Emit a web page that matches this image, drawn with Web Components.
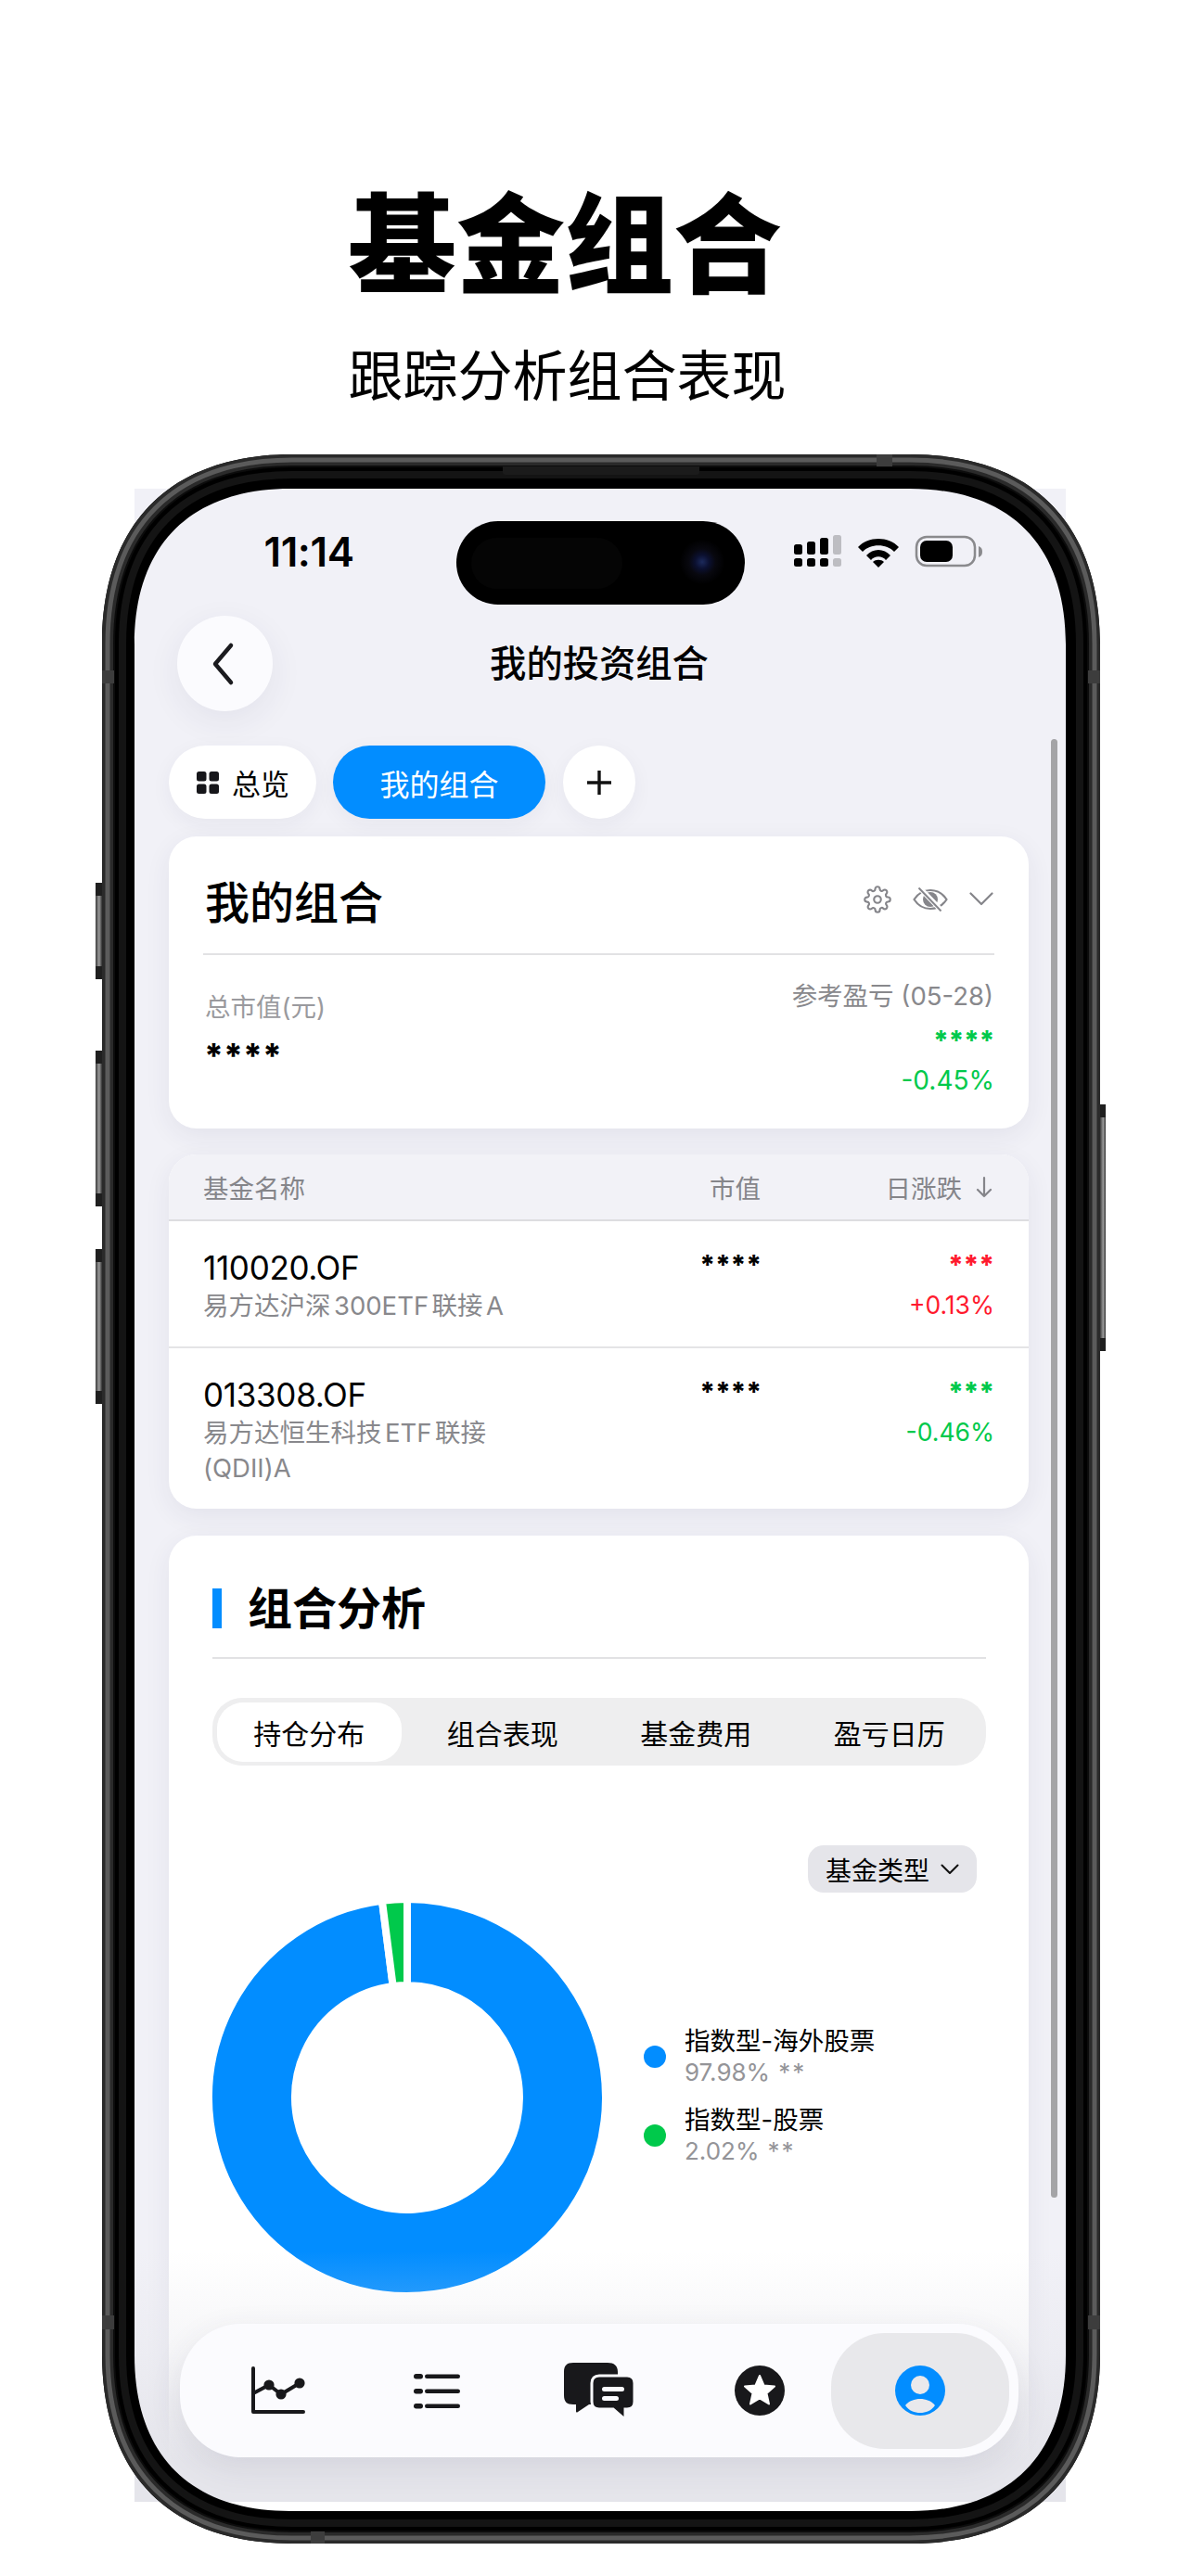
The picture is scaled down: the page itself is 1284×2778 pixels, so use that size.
<!DOCTYPE html>
<html lang="zh-CN">
<head>
<meta charset="utf-8">
<title>基金组合</title>
<style>
  html, body { margin: 0; padding: 0; background: #fff; }
  body { font-family: Inter, "Noto Sans CJK SC", sans-serif; color: #000; }
</style>
</head>
<body>
<promo-header heading="基金组合" sub="跟踪分析组合表现"></promo-header>

<phone-frame>
  <status-bar time="11:14"></status-bar>
  <nav-header>我的投资组合</nav-header>
  <tab-strip></tab-strip>
  <summary-card title="我的组合"></summary-card>
  <fund-table>
    <fund-row code="110020.OF" stars="***" pct="+0.13%" tone="up">易方达沪深300ETF联接A</fund-row>
    <fund-row code="013308.OF" stars="***" pct="-0.46%" tone="down">易方达恒生科技ETF联接(QDII)A</fund-row>
  </fund-table>
  <analysis-card title="组合分析">
    <seg-tabs items="持仓分布,组合表现,基金费用,盈亏日历"></seg-tabs>
    <holding-chart></holding-chart>
  </analysis-card>
  <bottom-bar></bottom-bar>
</phone-frame>

<script>
const CN = 'Inter, "Noto Sans CJK SC", sans-serif';
const BLUE = "#028dff";
const GREEN = "#00c94b";
const RED = "#ff1a2e";

class PromoHeader extends HTMLElement {
  constructor() {
    super();
    this._root = this.attachShadow({ mode: "open" });
  }

  connectedCallback() {
    this._root.innerHTML = `
      <style>
        :host {
          display: flex;
          flex-direction: column;
          align-items: center;
          height: 490px;
          box-sizing: border-box;
          padding: 195px 66px 0 0;
          font-family: ${CN};
          color: #000;
        }
        h1 { margin: 0; font-size: 117px; line-height: 140px; font-weight: 900; }
        p { margin: 36px 0 0 5px; font-size: 59px; line-height: 70px; font-weight: 400; }
      </style>
      <h1>${this.getAttribute("heading")}</h1>
      <p>${this.getAttribute("sub")}</p>
    `;
  }
}

class PhoneFrame extends HTMLElement {
  constructor() {
    super();
    this._root = this.attachShadow({ mode: "open" });
  }

  // rounded rect with a softer, iOS like corner
  _rr(x, y, w, h, r) {
    const c = r * 0.36;
    return `M${x + r} ${y}H${x + w - r}C${x + w - c} ${y} ${x + w} ${y + c} ${x + w} ${y + r}` +
      `V${y + h - r}C${x + w} ${y + h - c} ${x + w - c} ${y + h} ${x + w - r} ${y + h}` +
      `H${x + r}C${x + c} ${y + h} ${x} ${y + h - c} ${x} ${y + h - r}` +
      `V${y + r}C${x} ${y + c} ${x + c} ${y} ${x + r} ${y}Z`;
  }

  connectedCallback() {
    const outer = this._rr(0, 0, 1076, 2253, 205);
    const band = this._rr(13, 13, 1050, 2227, 192);
    const hole = this._rr(35, 37, 1004, 2181, 168);
    this._root.innerHTML = `
      <style>
        :host {
          display: block;
          position: relative;
          width: 1076px;
          height: 2253px;
          margin-left: 110px;
          box-sizing: border-box;
          padding: 37px 0 0 35px;
        }
        .screen {
          position: relative;
          width: 1004px;
          height: 2171px;
          overflow: hidden;
          background: #f1f1f7;
        }
        .bezel { position: absolute; left: 0; top: 0; pointer-events: none; }
        .btn {
          position: absolute;
          width: 7px;
          background: linear-gradient(90deg, #3a3a3a, #9b9b9b 55%, #333);
        }
        .btn::before, .btn::after {
          content: "";
          position: absolute;
          left: 0;
          right: 0;
          height: 14px;
          background: #1f1f1f;
        }
        .btn::before { top: 0; }
        .btn::after { bottom: 0; }
        .l { left: -7px; border-radius: 3px 0 0 3px; }
        .r { right: -6px; width: 6px; border-radius: 0 3px 3px 0; }
      </style>
      <div class="screen"><slot></slot></div>
      <svg class="bezel" width="1076" height="2253" viewBox="0 0 1076 2253">
        <path d="${outer}${hole}" fill="#000" fill-rule="evenodd"/>
        <path d="${outer}${band}" fill="#2a2a2a" fill-rule="evenodd"/>
        <path d="${this._rr(6, 6, 1064, 2241, 199)}" fill="none" stroke="#5b5b5b" stroke-width="5"/>
        <path d="${band}" fill="none" stroke="#0c0c0c" stroke-width="2"/>
        <path d="${this._rr(22, 22, 1032, 2209, 183)}" fill="none" stroke="#141414" stroke-width="8"/>
        <path d="M432 13H644V19Q644 22 641 22H435Q432 22 432 19Z" fill="#1b1b1b"/>
        <rect x="835" y="0" width="17" height="13" fill="#3d3d3d"/>
        <rect x="225" y="2240" width="15" height="13" fill="#3d3d3d"/>
        <rect x="0" y="233" width="13" height="14" fill="#3d3d3d"/>
        <rect x="1063" y="233" width="13" height="14" fill="#3d3d3d"/>
        <rect x="0" y="2007" width="13" height="15" fill="#3d3d3d"/>
        <rect x="1063" y="2007" width="13" height="15" fill="#3d3d3d"/>
      </svg>
      <div class="btn l" style="top:462px;height:104px"></div>
      <div class="btn l" style="top:643px;height:168px"></div>
      <div class="btn l" style="top:857px;height:167px"></div>
      <div class="btn r" style="top:701px;height:266px"></div>
    `;
  }
}

class StatusBar extends HTMLElement {
  constructor() {
    super();
    this._root = this.attachShadow({ mode: "open" });
  }

  connectedCallback() {
    this._root.innerHTML = `
      <style>
        :host {
          display: flex;
          height: 137px;
          box-sizing: border-box;
          padding-top: 35px;
          align-items: flex-start;
        }
        .time {
          width: 347px;
          box-sizing: border-box;
          padding-left: 29px;
          text-align: center;
          font: 600 44px/66px Inter, sans-serif;
          letter-spacing: -0.4px;
          color: #000;
        }
        .island {
          position: relative;
          width: 311px;
          height: 90px;
          border-radius: 45px;
          background: #000;
        }
        .sensor {
          position: absolute;
          left: 16px;
          top: 18px;
          width: 163px;
          height: 55px;
          border-radius: 28px;
          background: #050505;
        }
        .lens {
          position: absolute;
          left: 241px;
          top: 20px;
          width: 48px;
          height: 48px;
          border-radius: 50%;
          background: radial-gradient(circle, #1c2a5c 0, #0b1030 22%, #08080f 42%, #000 72%);
        }
        svg { display: block; margin: 15px 0 0 50px; }
      </style>
      <div class="time">${this.getAttribute("time")}</div>
      <div class="island"><div class="sensor"></div><div class="lens"></div></div>
      <svg width="210" height="38" viewBox="0 0 210 38">
        <g fill="#000">
          <rect x="3" y="25" width="9" height="9" rx="2.5"/>
          <rect x="17" y="25" width="9" height="9" rx="2.5"/>
          <rect x="31" y="25" width="9" height="9" rx="2.5"/>
          <rect x="3" y="10" width="9" height="11" rx="2.5"/>
          <rect x="17" y="7" width="9" height="14" rx="2.5"/>
          <rect x="31" y="3" width="9" height="18" rx="2.5"/>
        </g>
        <g fill="#bdbdc2">
          <rect x="45" y="25" width="9" height="9" rx="2.5"/>
          <rect x="45" y="0" width="9" height="21" rx="2.5"/>
        </g>
        <path d="M72 13C83 1 105 1 116 13L111 18C103 9 85 9 77 18Z" fill="#000"/>
        <path d="M81 22C88 14 100 14 107 22L102 27C98 22 90 22 86 27Z" fill="#000"/>
        <path d="M94 35L88 29C91 26 97 26 100 29Z" fill="#000"/>
        <rect x="135" y="2" width="63" height="31" rx="11" fill="none" stroke="#8a8a8d" stroke-width="2.5"/>
        <rect x="139" y="6" width="35" height="23" rx="7" fill="#000"/>
        <path d="M202 12C205 13 206 15 206 18C206 21 205 23 202 24Z" fill="#8a8a8d"/>
      </svg>
    `;
  }
}

class NavHeader extends HTMLElement {
  constructor() {
    super();
    this._root = this.attachShadow({ mode: "open" });
  }

  connectedCallback() {
    this._root.innerHTML = `
      <style>
        :host {
          display: grid;
          grid-template-columns: 1fr auto 1fr;
          align-items: center;
          height: 103px;
          padding: 0 46px;
          margin-bottom: 37px;
          font-family: ${CN};
        }
        .back {
          width: 103px;
          height: 103px;
          border-radius: 50%;
          background: #fbfbfe;
          box-shadow: 0 10px 36px rgba(40, 40, 80, .07);
          display: flex;
          align-items: center;
          justify-content: center;
        }
        .back svg { margin-right: 6px; }
        .title { font-size: 39.3px; font-weight: 500; line-height: 50px; color: #000; margin-right: 2px; }
      </style>
      <div class="back">
        <svg width="30" height="48" viewBox="0 0 30 48"><path d="M24 4L7 24L24 44" fill="none" stroke="#1b1b1f" stroke-width="4.5" stroke-linecap="round" stroke-linejoin="round"/></svg>
      </div>
      <div class="title"><slot></slot></div>
      <div></div>
    `;
  }
}

class TabStrip extends HTMLElement {
  constructor() {
    super();
    this._root = this.attachShadow({ mode: "open" });
  }

  connectedCallback() {
    this._root.innerHTML = `
      <style>
        :host {
          display: flex;
          height: 79px;
          padding-left: 37px;
          margin-bottom: 19px;
          font-family: ${CN};
          font-size: 31px;
        }
        .pill {
          display: flex;
          align-items: center;
          justify-content: center;
          height: 79px;
          border-radius: 40px;
          background: #fff;
          color: #000;
          box-sizing: border-box;
          box-shadow: 0 6px 22px rgba(40, 40, 80, .05);
        }
        .all { width: 159px; gap: 13px; margin-right: 18px; }
        .on { width: 229px; background: ${BLUE}; color: #fff; margin-right: 19px; font-size: 32px; }
        .add { width: 78px; }
      </style>
      <div class="pill all">
        <svg width="26" height="26" viewBox="0 0 26 26" fill="#16161a">
          <rect x="1" y="1" width="10.5" height="10.5" rx="2.5"/><rect x="14.5" y="1" width="10.5" height="10.5" rx="2.5"/>
          <rect x="1" y="14.5" width="10.5" height="10.5" rx="2.5"/><rect x="14.5" y="14.5" width="10.5" height="10.5" rx="2.5"/>
        </svg>
        <span>总览</span>
      </div>
      <div class="pill on">我的组合</div>
      <div class="pill add">
        <svg width="26" height="26" viewBox="0 0 26 26"><path d="M13 0V26M0 13H26" stroke="#111" stroke-width="3.4"/></svg>
      </div>
    `;
  }
}

class SummaryCard extends HTMLElement {
  constructor() {
    super();
    this._root = this.attachShadow({ mode: "open" });
  }

  connectedCallback() {
    this._root.innerHTML = `
      <style>
        :host {
          display: block;
          width: 927px;
          height: 315px;
          margin: 0 0 28px 37px;
          box-sizing: border-box;
          padding: 0 37px;
          background: #fff;
          border-radius: 30px;
          box-shadow: 0 8px 28px rgba(40, 40, 80, .07);
          font-family: ${CN};
        }
        .head {
          display: flex;
          align-items: center;
          height: 128px;
          box-sizing: border-box;
          padding: 18px 0 0 2px;
          border-bottom: 2px solid #e2e2e4;
        }
        h2 { margin: 0 auto 0 0; font-size: 48px; line-height: 60px; font-weight: 500; }
        .icons { display: flex; align-items: center; gap: 21px; margin: -9px 1px 0 0; }
        .body { display: flex; justify-content: space-between; padding: 0 0 0 1px; }
        .left { padding-top: 39px; }
        .right { padding-top: 27px; text-align: right; }
        .label { font-size: 27.5px; line-height: 34px; color: #9a9a9e; padding-left: 1px; }
        .right .label { color: #88888c; margin-right: 1px; }
        .mask { font-weight: 800; font-size: 36px; line-height: 40px; }
        .left .mask { margin-top: 15px; }
        .right .mask { color: ${GREEN}; font-size: 29px; line-height: 34px; margin-top: 14px; letter-spacing: -0.4px; }
        .pct { color: ${GREEN}; font-size: 28px; line-height: 40px; margin-top: 6px; }
      </style>
      <div class="head">
        <h2>${this.getAttribute("title")}</h2>
        <div class="icons">
          <svg width="30" height="30" viewBox="0 0 24 24" fill="none" stroke="#85858a" stroke-width="1.7" style="margin-right:2px">
            <circle cx="12" cy="12" r="3"/>
            <path d="M19.4 15a1.65 1.65 0 00.33 1.82l.06.06a2 2 0 010 2.83 2 2 0 01-2.83 0l-.06-.06a1.65 1.65 0 00-1.82-.33 1.65 1.65 0 00-1 1.51V21a2 2 0 01-2 2 2 2 0 01-2-2v-.09A1.65 1.65 0 009 19.4a1.65 1.65 0 00-1.82.33l-.06.06a2 2 0 01-2.83 0 2 2 0 010-2.83l.06-.06a1.65 1.65 0 00.33-1.82 1.65 1.65 0 00-1.51-1H3a2 2 0 01-2-2 2 2 0 012-2h.09A1.65 1.65 0 004.6 9a1.65 1.65 0 00-.33-1.82l-.06-.06a2 2 0 010-2.83 2 2 0 012.83 0l.06.06a1.65 1.65 0 001.82.33H9a1.65 1.65 0 001-1.51V3a2 2 0 012-2 2 2 0 012 2v.09a1.65 1.65 0 001 1.51 1.65 1.65 0 001.82-.33l.06-.06a2 2 0 012.83 0 2 2 0 010 2.83l-.06.06a1.65 1.65 0 00-.33 1.82V9a1.65 1.65 0 001.51 1H21a2 2 0 012 2 2 2 0 01-2 2h-.09a1.65 1.65 0 00-1.51 1z"/>
          </svg>
          <svg width="38" height="26" viewBox="0 0 38 26">
            <path d="M1.5 13C6 6 12 3 19 3S32 6 36.5 13C32 20 26 23 19 23S6 20 1.5 13Z" fill="none" stroke="#85858a" stroke-width="2.2"/>
            <circle cx="19" cy="13" r="8" fill="#85858a"/>
            <path d="M8 1L31 25" stroke="#fff" stroke-width="5.5"/>
            <path d="M6.5 0.5L30.5 25.5" stroke="#85858a" stroke-width="2"/>
          </svg>
          <svg width="26" height="15" viewBox="0 0 26 15" style="margin-left:2px"><path d="M1.5 1.5L13 13L24.5 1.5" fill="none" stroke="#85858a" stroke-width="2.2" stroke-linecap="round" stroke-linejoin="round"/></svg>
        </div>
      </div>
      <div class="body">
        <div class="left">
          <div class="label">总市值(元)</div>
          <div class="mask">****</div>
        </div>
        <div class="right">
          <div class="label">参考盈亏 (05-28)</div>
          <div class="mask">****</div>
          <div class="pct">-0.45%</div>
        </div>
      </div>
    `;
  }
}

class FundTable extends HTMLElement {
  constructor() {
    super();
    this._root = this.attachShadow({ mode: "open" });
  }

  connectedCallback() {
    this._root.innerHTML = `
      <style>
        :host {
          display: block;
          width: 927px;
          height: 382px;
          margin: 0 0 29px 37px;
          background: #fff;
          border-radius: 30px;
          overflow: hidden;
          box-shadow: 0 8px 28px rgba(40, 40, 80, .07);
          font-family: ${CN};
        }
        .head {
          display: grid;
          grid-template-columns: 1fr 120px 251px;
          align-items: center;
          height: 72px;
          box-sizing: border-box;
          padding: 0 38px 0 37px;
          background: #f2f2f7;
          border-bottom: 2px solid #dddde0;
          font-size: 27.5px;
          color: #85858a;
        }
        .end { justify-self: end; display: flex; align-items: center; gap: 14px; }
      </style>
      <div class="head">
        <span>基金名称</span>
        <span class="end">市值</span>
        <span class="end">日涨跌
          <svg width="20" height="24" viewBox="0 0 20 24"><path d="M10 2V22M3 15L10 22L17 15" fill="none" stroke="#85858a" stroke-width="2.2" stroke-linecap="round" stroke-linejoin="round"/></svg>
        </span>
      </div>
      <slot></slot>
    `;
  }
}

class FundRow extends HTMLElement {
  constructor() {
    super();
    this._root = this.attachShadow({ mode: "open" });
  }

  connectedCallback() {
    const tone = this.getAttribute("tone") === "up" ? RED : GREEN;
    this._root.innerHTML = `
      <style>
        :host {
          display: grid;
          grid-template-columns: 1fr 120px 251px;
          box-sizing: border-box;
          padding: 28px 37px 0 37px;
          min-height: 137px;
          border-bottom: 2px solid #e4e4e6;
          font-family: ${CN};
        }
        :host(:last-child) { border-bottom: 0; }
        .code { font-size: 35px; line-height: 44px; color: #000; letter-spacing: -0.3px; }
        .name {
          width: 340px;
          font-size: 27.5px;
          line-height: 38px;
          color: #88888c;
          text-autospace: normal;
        }
        .end { text-align: right; }
        .mask { font-size: 29px; font-weight: 800; line-height: 34px; padding-top: 2px; letter-spacing: -0.2px; }
        .pct { font-size: 26.5px; line-height: 38px; margin-top: 7px; }
      </style>
      <div>
        <div class="code">${this.getAttribute("code")}</div>
        <div class="name"><slot></slot></div>
      </div>
      <div class="end"><div class="mask">****</div></div>
      <div class="end" style="color:${tone}">
        <div class="mask">${this.getAttribute("stars")}</div>
        <div class="pct">${this.getAttribute("pct")}</div>
      </div>
    `;
  }
}

class AnalysisCard extends HTMLElement {
  constructor() {
    super();
    this._root = this.attachShadow({ mode: "open" });
  }

  connectedCallback() {
    this._root.innerHTML = `
      <style>
        :host {
          display: block;
          width: 927px;
          height: 1100px;
          margin-left: 37px;
          box-sizing: border-box;
          padding: 0 46px 0 47px;
          background: #fff;
          border-radius: 30px;
          box-shadow: 0 8px 28px rgba(40, 40, 80, .07);
          font-family: ${CN};
        }
        .head {
          display: flex;
          align-items: center;
          gap: 28px;
          height: 133px;
          box-sizing: border-box;
          padding-top: 26px;
          border-bottom: 2px solid #e2e2e4;
        }
        .bar { width: 10px; height: 43px; background: ${BLUE}; }
        h2 { margin: 0; font-size: 48px; line-height: 60px; font-weight: 700; letter-spacing: 0; }
      </style>
      <div class="head"><div class="bar"></div><h2>${this.getAttribute("title")}</h2></div>
      <slot></slot>
    `;
  }
}

class SegTabs extends HTMLElement {
  constructor() {
    super();
    this._root = this.attachShadow({ mode: "open" });
  }

  connectedCallback() {
    const cells = this.getAttribute("items").split(",")
      .map((t, i) => `<div class="cell${i === 0 ? " on" : ""}"><span>${t}</span></div>`).join("");
    this._root.innerHTML = `
      <style>
        :host {
          display: grid;
          grid-template-columns: repeat(4, 1fr);
          height: 73px;
          margin-top: 42px;
          background: #eeeeef;
          border-radius: 32px;
          font-family: ${CN};
          font-size: 30px;
          color: #000;
        }
        .cell { display: flex; align-items: center; justify-content: center; }
        .on { margin: 5px 5px 4px; background: #fff; border-radius: 28px; }
      </style>
      ${cells}
    `;
  }
}

class HoldingChart extends HTMLElement {
  constructor() {
    super();
    this._root = this.attachShadow({ mode: "open" });
  }

  // one ring segment, angles in degrees from 12 o'clock
  // radii are 4px past the visible edge, the white stroke eats them back
  _seg(a, b, color) {
    const p = (r, d) => {
      const t = (d - 90) * Math.PI / 180;
      return `${(210 + r * Math.cos(t)).toFixed(2)} ${(210 + r * Math.sin(t)).toFixed(2)}`;
    };
    const big = b - a > 180 ? 1 : 0;
    return `<path d="M${p(214, a)}A214 214 0 ${big} 1 ${p(214, b)}L${p(121, b)}A121 121 0 ${big} 0 ${p(121, a)}Z" fill="${color}" stroke="#fff" stroke-width="8"/>`;
  }

  connectedCallback() {
    this._root.innerHTML = `
      <style>
        :host { display: block; font-family: ${CN}; }
        .tools { display: flex; justify-content: flex-end; margin-top: 86px; padding-right: 10px; }
        .pick {
          display: flex;
          align-items: center;
          gap: 12px;
          height: 51px;
          padding: 0 19px 0 19px;
          border-radius: 17px;
          background: #e5e5ea;
          font-size: 28px;
          color: #000;
        }
        .row { display: flex; align-items: center; gap: 46px; margin-top: 11px; }
        svg.ring { display: block; overflow: visible; }
        .legend { display: flex; flex-direction: column; gap: 17px; margin-top: -3px; }
        .item { display: grid; grid-template-columns: 24px auto; column-gap: 20px; align-items: center; margin-left: -1px; }
        .dot { width: 24px; height: 24px; border-radius: 50%; grid-row: 1 / 3; }
        .name { font-size: 27.5px; line-height: 34px; color: #000; white-space: nowrap; }
        .val { font-size: 26px; line-height: 34px; color: #949498; }
        .val i { font-style: normal; margin-left: 9px; letter-spacing: 2px; }
      </style>
      <div class="tools">
        <div class="pick">基金类型
          <svg width="20" height="12" viewBox="0 0 20 12"><path d="M1.5 1.5L10 10L18.500 1.5" fill="none" stroke="#111" stroke-width="2" stroke-linecap="round" stroke-linejoin="round"/></svg>
        </div>
      </div>
      <div class="row">
        <svg class="ring" width="420" height="420" viewBox="0 0 420 420">
          ${this._seg(0, 352.73, BLUE)}
          ${this._seg(352.73, 360, GREEN)}
        </svg>
        <div class="legend">
          <div class="item"><div class="dot" style="background:${BLUE}"></div><div class="name">指数型-海外股票</div><div class="val">97.98%<i>**</i></div></div>
          <div class="item"><div class="dot" style="background:${GREEN}"></div><div class="name">指数型-股票</div><div class="val">2.02%<i>**</i></div></div>
        </div>
      </div>
    `;
  }
}

class BottomBar extends HTMLElement {
  constructor() {
    super();
    this._root = this.attachShadow({ mode: "open" });
  }

  connectedCallback() {
    this._root.innerHTML = `
      <style>
        /* the host is only a zero size anchor, everything here floats over the page */
        :host { display: block; }
        .thumb {
          position: absolute;
          left: 988px;
          top: 270px;
          width: 7px;
          height: 1573px;
          border-radius: 4px;
          background: #a4a4a7;
        }
        .fade {
          position: absolute;
          left: 0;
          right: 0;
          bottom: 0;
          height: 270px;
          background: linear-gradient(rgba(228, 228, 234, 0), rgba(228, 228, 234, .35) 40%, #e5e5eb 84%);
        }
        .bar {
          position: absolute;
          left: 49px;
          bottom: 48px;
          width: 904px;
          height: 144px;
          box-sizing: border-box;
          padding-left: 19px;
          display: flex;
          align-items: center;
          border-radius: 66px;
          background: #fbfbfe;
          box-shadow: 0 10px 34px rgba(60, 60, 90, .1);
        }
        .item {
          width: 173px;
          height: 125px;
          display: flex;
          align-items: center;
          justify-content: center;
          flex: none;
        }
        .active {
          width: 192px;
          margin-left: -9px;
          background: #e8e8eb;
          border-radius: 58px;
        }
        svg { display: block; }
      </style>
      <div class="thumb"></div>
      <div class="fade"></div>
      <div class="bar">
        <div class="item">
          <svg width="60" height="52" viewBox="0 0 60 52" fill="none" stroke="#18181b" stroke-width="4" stroke-linecap="round" stroke-linejoin="round">
            <path d="M3 2V49H57"/>
            <path d="M3 29L20 20L33 30L53 18"/>
            <circle cx="20" cy="20" r="3.6" fill="#18181b"/><circle cx="33" cy="30" r="3.6" fill="#18181b"/><circle cx="53" cy="18" r="3.6" fill="#18181b"/>
          </svg>
        </div>
        <div class="item">
          <svg width="56" height="42" viewBox="0 0 56 42" fill="#18181b">
            <rect x="1" y="3" width="10" height="5.5" rx="2.7"/><rect x="13" y="3.6" width="38" height="4.4" rx="2.2"/>
            <rect x="1" y="19" width="10" height="5.5" rx="2.7"/><rect x="13" y="19.6" width="38" height="4.4" rx="2.2"/>
            <rect x="1" y="35" width="10" height="5.5" rx="2.7"/><rect x="13" y="35.6" width="38" height="4.4" rx="2.2"/>
          </svg>
        </div>
        <div class="item">
          <svg width="78" height="62" viewBox="0 0 78 62">
            <path d="M11 1H48C55 1 59 4 59 11V36C59 43 55 46 48 46H28L16 54C14.500 55 14 54.500 14 53V46H11C4 46 1 43 1 36V11C1 4 4 1 11 1Z" fill="#18181b"/>
            <path d="M39 15H69C74 15 77 18 77 23V43C77 48 74 51 69 51H67V59C67 61 65.500 61 64.500 60L54 51H39C34 51 31 48 31 43V23C31 18 34 15 39 15Z" fill="#18181b" stroke="#fbfbfe" stroke-width="3"/>
            <rect x="42" y="27" width="24" height="5" rx="2.500" fill="#fbfbfe"/>
            <rect x="42" y="37" width="18" height="5" rx="2.500" fill="#fbfbfe"/>
          </svg>
        </div>
        <div class="item">
          <svg width="54" height="54" viewBox="0 0 54 54">
            <circle cx="27" cy="27" r="27" fill="#18181b"/>
            <path d="M27 11L31.500 21.500L43 22.500L34.500 30L37 41.500L27 35.500L17 41.500L19.500 30L11 22.500L22.500 21.500Z" fill="#fff" stroke="#fff" stroke-width="2" stroke-linejoin="round"/>
          </svg>
        </div>
        <div class="item active">
          <svg width="54" height="54" viewBox="0 0 54 54">
            <circle cx="27" cy="27" r="27" fill="${BLUE}"/>
            <circle cx="27" cy="21" r="10" fill="#e9e9ec"/>
            <path d="M11 43C15 38 21 36 27 36C33 36 39 38 43 43C39 49 33 51 27 51C21 51 15 49 11 43Z" fill="#e9e9ec"/>
          </svg>
        </div>
      </div>
    `;
  }
}

customElements.define("promo-header", PromoHeader);
customElements.define("phone-frame", PhoneFrame);
customElements.define("status-bar", StatusBar);
customElements.define("nav-header", NavHeader);
customElements.define("tab-strip", TabStrip);
customElements.define("summary-card", SummaryCard);
customElements.define("fund-table", FundTable);
customElements.define("fund-row", FundRow);
customElements.define("analysis-card", AnalysisCard);
customElements.define("seg-tabs", SegTabs);
customElements.define("holding-chart", HoldingChart);
customElements.define("bottom-bar", BottomBar);
</script>
</body>
</html>
